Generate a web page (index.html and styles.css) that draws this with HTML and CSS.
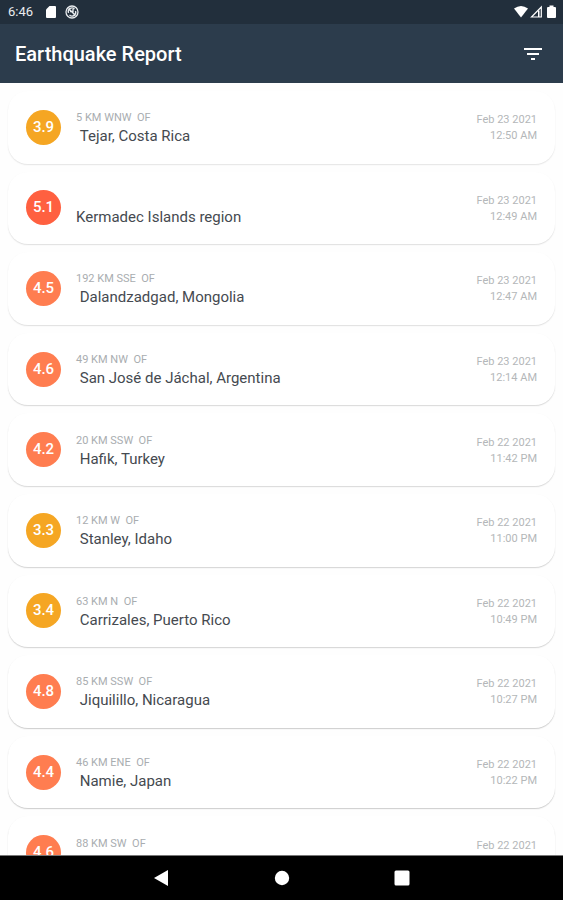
FILE: index.html
```html
<!DOCTYPE html>
<html lang="en">
<head>
<meta charset="utf-8">
<meta name="viewport" content="width=device-width, initial-scale=1">
<title>Earthquake Report</title>
<link rel="stylesheet" href="styles.css">
</head>
<body>
<div class="status">
  <span class="clock">6:46</span>
  <svg class="sd" viewBox="0 0 10 12" aria-hidden="true"><path d="M3.500 0H9a1 1 0 0 1 1 1v10a1 1 0 0 1-1 1H1a1 1 0 0 1-1-1V3.500z"/></svg>
  <svg class="sync" viewBox="0 0 14 14" aria-hidden="true"><circle cx="7" cy="7" r="6"/><path d="M3.500 8a3.700 3.700 0 0 1 6-4M10.500 6a3.700 3.700 0 0 1-6 4M3.500 3.500l7 7M5 6.500h3V4"/></svg>
  <svg class="signals" viewBox="0 0 44 14" aria-hidden="true"><path d="M1 3.500Q8-1.500 15 3.500L8 12.500z"/><path class="hollow" d="M28.300 2v10H18.500z"/><path d="M25 5.500h1.500V12H25z"/><path d="M36.500 2V.500h4V2H42q1 0 1 1v9q0 1-1 1h-7q-1 0-1-1V3q0-1 1-1z"/></svg>
</div>
<header class="appbar">
  <h1>Earthquake Report</h1>
  <button class="filter" type="button" aria-label="Filter">
    <svg viewBox="0 0 18 12" aria-hidden="true"><path d="M0 0h18v2H0zM3 5h12v2H3zM7 10h4v2H7z"/></svg>
  </button>
</header>
<main>
  <ul class="quakes">
    <li class="card"><span class="mag minor">3.9</span><div class="place"><span class="offset">5 KM WNW&nbsp; OF</span><span class="name">&nbsp;Tejar, Costa Rica</span></div><time class="when"><span>Feb 23 2021</span><span>12:50 AM</span></time></li>
    <li class="card"><span class="mag strong">5.1</span><div class="place"><span class="offset"></span><span class="name">Kermadec Islands region</span></div><time class="when"><span>Feb 23 2021</span><span>12:49 AM</span></time></li>
    <li class="card"><span class="mag">4.5</span><div class="place"><span class="offset">192 KM SSE&nbsp; OF</span><span class="name">&nbsp;Dalandzadgad, Mongolia</span></div><time class="when"><span>Feb 23 2021</span><span>12:47 AM</span></time></li>
    <li class="card"><span class="mag">4.6</span><div class="place"><span class="offset">49 KM NW&nbsp; OF</span><span class="name">&nbsp;San José de Jáchal, Argentina</span></div><time class="when"><span>Feb 23 2021</span><span>12:14 AM</span></time></li>
    <li class="card"><span class="mag">4.2</span><div class="place"><span class="offset">20 KM SSW&nbsp; OF</span><span class="name">&nbsp;Hafik, Turkey</span></div><time class="when"><span>Feb 22 2021</span><span>11:42 PM</span></time></li>
    <li class="card"><span class="mag minor">3.3</span><div class="place"><span class="offset">12 KM W&nbsp; OF</span><span class="name">&nbsp;Stanley, Idaho</span></div><time class="when"><span>Feb 22 2021</span><span>11:00 PM</span></time></li>
    <li class="card"><span class="mag minor">3.4</span><div class="place"><span class="offset">63 KM N&nbsp; OF</span><span class="name">&nbsp;Carrizales, Puerto Rico</span></div><time class="when"><span>Feb 22 2021</span><span>10:49 PM</span></time></li>
    <li class="card"><span class="mag">4.8</span><div class="place"><span class="offset">85 KM SSW&nbsp; OF</span><span class="name">&nbsp;Jiquilillo, Nicaragua</span></div><time class="when"><span>Feb 22 2021</span><span>10:27 PM</span></time></li>
    <li class="card"><span class="mag">4.4</span><div class="place"><span class="offset">46 KM ENE&nbsp; OF</span><span class="name">&nbsp;Namie, Japan</span></div><time class="when"><span>Feb 22 2021</span><span>10:22 PM</span></time></li>
    <li class="card"><span class="mag">4.6</span><div class="place"><span class="offset">88 KM SW&nbsp; OF</span><span class="name">&nbsp;Tocopilla, Chile</span></div><time class="when"><span>Feb 22 2021</span><span>10:10 PM</span></time></li>
  </ul>
</main>
<nav class="navbar" aria-label="System">
  <button type="button" aria-label="Back"><svg viewBox="0 0 16 16"><path d="M14 0v16L0 8z"/></svg></button>
  <button type="button" aria-label="Home"><svg viewBox="0 0 16 16"><circle cx="8" cy="8" r="7.200"/></svg></button>
  <button type="button" aria-label="Recents"><svg viewBox="0 0 16 16"><rect x=".500" y=".500" width="15" height="15" rx="1.500"/></svg></button>
</nav>
</body>
</html>
```
FILE: styles.css
```css
* { box-sizing: border-box; }
body {
  margin: 0;
  height: 100vh;
  display: flex;
  flex-direction: column;
  background: #fefefe;
  color: #454a50;
  font-family: Roboto, "Liberation Sans", sans-serif;
}
button { padding: 0; border: 0; background: none; }
svg { display: block; fill: #fff; }

.status {
  flex: none;
  height: 24px;
  padding: 0 6px 0 8px;
  display: flex;
  align-items: center;
  background: #222f3c;
  color: #e8ecef;
}
.clock { font-size: 13px; line-height: 24px; }
.sd { width: 10px; height: 12px; margin-left: 13px; }
.sync { width: 14px; height: 14px; margin-left: 9px; fill: none; stroke: #e8ecef; stroke-width: 1.3; }
.signals { width: 44px; height: 14px; margin-left: auto; }
.hollow { fill: none; stroke: #fff; stroke-width: 1.2; }

.appbar {
  flex: none;
  height: 59px;
  padding: 0 21px 0 15px;
  display: flex;
  align-items: center;
  justify-content: space-between;
  background: #2c3c4c;
  color: #fff;
}
h1 { margin: 0; font-size: 20px; font-weight: 500; line-height: 24px; }
.filter svg { width: 18px; height: 12px; }

main { flex: 1; min-height: 0; overflow: hidden; padding-top: 4px; }
.quakes {
  margin: 0;
  padding: 0 8px;
  list-style: none;
  height: calc(100% + 38px);
  display: grid;
  grid-template-rows: repeat(10, 1fr);
}
.card {
  --shade: 5%;
  margin: 4px 0;
  padding: 0 18px;
  display: flex;
  align-items: center;
  background: #fff;
  border-radius: 20px;
  box-shadow: 0 1px 1px rgb(0 0 0 / var(--shade)), 0 1px 2px rgb(0 0 0 / 6%);
}
.card:nth-child(n+2) { --shade: 7%; }
.card:nth-child(n+4) { --shade: 10%; }
.card:nth-child(n+6) { --shade: 12%; }
.card:nth-child(n+8) { --shade: 15%; }

.mag {
  flex: none;
  width: 35px;
  height: 35px;
  border-radius: 50%;
  background: #ff7d50;
  color: #fff;
  font-size: 15px;
  font-weight: 500;
  line-height: 35px;
  text-align: center;
}
.mag.minor { background: #f5a623; }
.mag.strong { background: #ff6040; }
.place { flex: 1; margin-left: 15px; padding-top: 2px; display: grid; grid-template-rows: 16px 20px; }
.offset { font-size: 11px; line-height: 16px; color: #a9adb0; }
.name { font-size: 15px; line-height: 20px; }
.when { padding-top: 2px; display: grid; font-size: 11px; line-height: 16px; color: #b4b7b9; text-align: right; }

.navbar {
  flex: none;
  height: 45px;
  border-top: 1px solid #777;
  display: flex;
  justify-content: center;
  align-items: center;
  gap: 104px;
  background: #000;
}
.navbar svg { width: 16px; height: 16px; }
```
